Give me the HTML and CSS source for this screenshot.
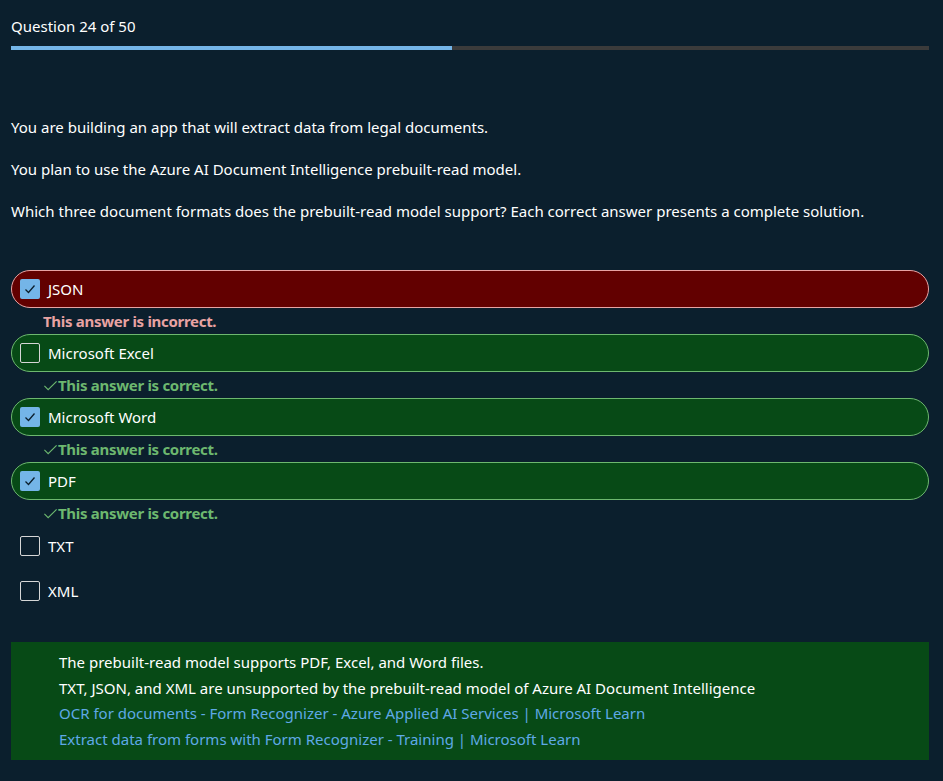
FILE: index.html
```html
<!DOCTYPE html>
<html>
<head>
<meta charset="utf-8">
<link rel="stylesheet" href="styles.css">
</head>
<body>
<div class="page">
  <div class="header">
    <div class="qnum">Question 24 of 50</div>
    <div class="progress"><div class="fill" style="width:48%"></div></div>
  </div>
  <div class="question">
    <p>You are building an app that will extract data from legal documents.</p>
    <p>You plan to use the Azure AI Document Intelligence prebuilt-read model.</p>
    <p>Which three document formats does the prebuilt-read model support? Each correct answer presents a complete solution.</p>
  </div>
  <div class="options">
    <div class="opt wrong">
      <span class="cb checked"><svg viewBox="0 0 20 20" width="20" height="20"><path d="M5.5 10.5 L8.5 13.5 L14.5 6.5" fill="none" stroke="#0b1f2d" stroke-width="1.3"/></svg></span>
      <span class="label">JSON</span>
    </div>
    <div class="fb bad">This answer is incorrect.</div>
    <div class="opt right">
      <span class="cb"></span>
      <span class="label">Microsoft Excel</span>
    </div>
    <div class="fb good"><svg class="tick" viewBox="0 0 16 16" width="15" height="15"><path d="M1.5 8.5 L5.5 12.5 L14.5 3.5" fill="none" stroke="currentColor" stroke-width="1.2"/></svg>This answer is correct.</div>
    <div class="opt right">
      <span class="cb checked"><svg viewBox="0 0 20 20" width="20" height="20"><path d="M5.5 10.5 L8.5 13.5 L14.5 6.5" fill="none" stroke="#0b1f2d" stroke-width="1.3"/></svg></span>
      <span class="label">Microsoft Word</span>
    </div>
    <div class="fb good"><svg class="tick" viewBox="0 0 16 16" width="15" height="15"><path d="M1.5 8.5 L5.5 12.5 L14.5 3.5" fill="none" stroke="currentColor" stroke-width="1.2"/></svg>This answer is correct.</div>
    <div class="opt right">
      <span class="cb checked"><svg viewBox="0 0 20 20" width="20" height="20"><path d="M5.5 10.5 L8.5 13.5 L14.5 6.5" fill="none" stroke="#0b1f2d" stroke-width="1.3"/></svg></span>
      <span class="label">PDF</span>
    </div>
    <div class="fb good"><svg class="tick" viewBox="0 0 16 16" width="15" height="15"><path d="M1.5 8.5 L5.5 12.5 L14.5 3.5" fill="none" stroke="currentColor" stroke-width="1.2"/></svg>This answer is correct.</div>
    <div class="opt plain">
      <span class="cb"></span>
      <span class="label">TXT</span>
    </div>
    <div class="opt plain">
      <span class="cb"></span>
      <span class="label">XML</span>
    </div>
  </div>
  <div class="explain">
    <div>The prebuilt-read model supports PDF, Excel, and Word files.</div>
    <div>TXT, JSON, and XML are unsupported by the prebuilt-read model of Azure AI Document Intelligence</div>
    <div><a href="#">OCR for documents - Form Recognizer - Azure Applied AI Services | Microsoft Learn</a></div>
    <div><a href="#">Extract data from forms with Form Recognizer - Training | Microsoft Learn</a></div>
  </div>
</div>
</body>
</html>
```

FILE: styles.css
```css
html, body {
  margin: 0;
  padding: 0;
  background: #0b1f2d;
}
body {
  font-family: "Noto Sans", "Open Sans", sans-serif;
  font-size: 15px;
  color: #ffffff;
}
.page {
  padding: 0 14px 0 11px;
}
.header {
  padding-top: 16px;
}
.qnum {
  line-height: 20px;
  height: 20px;
}
.progress {
  margin-top: 10px;
  height: 4px;
  background: #3b3b3b;
}
.fill {
  height: 100%;
  background: #74b5e8;
}
.question {
  padding-top: 67px;
}
.question p {
  margin: 0 0 21px 0;
  line-height: 21px;
}
.options {
  margin-top: 48px;
  display: flex;
  flex-direction: column;
}
.opt {
  display: flex;
  align-items: center;
  height: 38px;
  box-sizing: border-box;
  padding-left: 8px;
  border-radius: 19px;
  border: 1px solid transparent;
}
.opt.wrong {
  background: #620000;
  border-color: #e8a3a3;
}
.opt.right {
  background: #074a16;
  border-color: #6db86f;
}
.opt.plain {
  height: 40px;
}
.opt.plain + .opt.plain {
  margin-top: 5px;
}
.cb {
  width: 18px;
  height: 18px;
  border: 1px solid #d6d6d6;
  border-radius: 2px;
  display: inline-flex;
  align-items: center;
  justify-content: center;
  flex: none;
}
.cb.checked {
  width: 20px;
  height: 20px;
  border: none;
  background: #74b5e8;
}
.label {
  margin-left: 8px;
}
.fb {
  height: 26px;
  line-height: 26px;
  padding-left: 32px;
  font-weight: 700;
  letter-spacing: -0.3px;
  display: flex;
  align-items: center;
}
.fb.bad {
  color: #e8a3a3;
}
.fb.good {
  color: #6db86f;
}
.explain {
  margin-top: 31px;
  background: #074a16;
  padding: 8px 0 7px 48px;
  line-height: 25.7px;
}
.explain a {
  color: #5fa9e6;
  text-decoration: none;
}
```
